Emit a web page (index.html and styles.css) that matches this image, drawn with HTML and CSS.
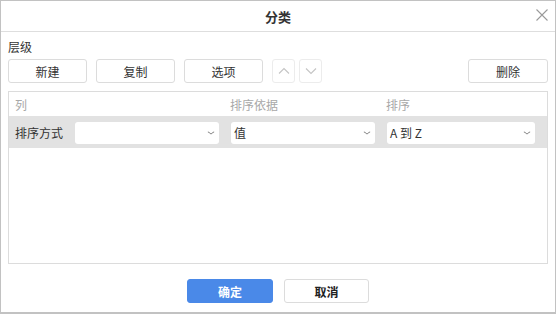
FILE: index.html
```html
<!DOCTYPE html>
<html lang="zh-CN">
<head>
    <meta charset="UTF-8">
    <meta name="viewport" content="width=device-width, initial-scale=1.0">
    <title>分类</title>
    <link rel="stylesheet" href="styles.css">
</head>
<body>
    <div class="dialog">
        <div class="dialog-header">
            <span class="dialog-title">分类</span>
            <button class="close-btn" title="关闭">
                <svg width="12" height="12" viewBox="0 0 12 12"><path d="M0.5 0.5 L11.5 11.5 M11.5 0.5 L0.5 11.5" stroke="#9a9a9a" stroke-width="1.1" fill="none"/></svg>
            </button>
        </div>

        <div class="dialog-body">
            <div class="section-label">层级</div>
            <div class="toolbar">
                <button class="btn">新建</button>
                <button class="btn">复制</button>
                <button class="btn">选项</button>
                <button class="btn-icon">
                    <svg width="12" height="8" viewBox="0 0 12 8"><path d="M1 6.5 L6 1.5 L11 6.5" stroke="#c4c4c4" stroke-width="1.1" fill="none"/></svg>
                </button>
                <button class="btn-icon">
                    <svg width="12" height="8" viewBox="0 0 12 8"><path d="M1 1.5 L6 6.5 L11 1.5" stroke="#c4c4c4" stroke-width="1.1" fill="none"/></svg>
                </button>
                <button class="btn btn-right">删除</button>
            </div>

            <div class="level-table">
                <div class="row row-head">
                    <span>列</span>
                    <span></span>
                    <span class="head-shift">排序依据</span>
                    <span class="head-shift">排序</span>
                </div>
                <div class="row row-level">
                    <span class="row-name">排序方式</span>
                    <div class="fake-select"><span></span><i class="caret"></i></div>
                    <div class="fake-select"><span>值</span><i class="caret"></i></div>
                    <div class="fake-select"><span>A 到 Z</span><i class="caret"></i></div>
                </div>
            </div>
        </div>

        <div class="dialog-footer">
            <button class="btn btn-primary">确定</button>
            <button class="btn btn-cancel">取消</button>
        </div>
    </div>
</body>
</html>
```

FILE: styles.css
```css
* {
    box-sizing: border-box;
}

body {
    margin: 0;
    background: #fff;
    color: #333;
    font-family: "Noto Sans CJK SC", "Liberation Sans", sans-serif;
    font-size: 12px;
    overflow: hidden;
}

.dialog {
    width: 556px;
    height: 314px;
    border: 1px solid #c2c2c2;
    border-bottom-width: 2px;
    background: #fff;
    display: flex;
    flex-direction: column;
}

.dialog-header {
    position: relative;
    height: 31px;
    border-bottom: 1px solid #dedede;
    display: flex;
    justify-content: center;
    align-items: center;
}

.dialog-title {
    font-size: 13px;
    font-weight: bold;
    color: #333;
    line-height: 16px;
    margin-top: 1px;
}

.close-btn {
    position: absolute;
    right: 7px;
    top: 8px;
    width: 12px;
    height: 12px;
    padding: 0;
    border: 0;
    background: none;
    display: flex;
}

.dialog-body {
    padding: 7px 7px 0;
}

.section-label {
    line-height: 16px;
    color: #333;
}

.toolbar {
    display: flex;
    gap: 9px;
    margin-top: 4px;
}

.btn {
    width: 79px;
    height: 24px;
    padding: 0;
    border: 1px solid #dcdcdc;
    border-radius: 3px;
    background: #fff;
    color: #333;
    font-family: inherit;
    font-size: 12px;
}

.btn-icon {
    width: 23px;
    height: 24px;
    padding: 0;
    border: 1px solid #ececec;
    border-radius: 3px;
    background: #fff;
    display: flex;
    align-items: center;
    justify-content: center;
}

.btn-icon + .btn-icon {
    margin-left: -5px;
}

.btn-right {
    margin-left: auto;
    width: 80px;
}

.level-table {
    margin-top: 8px;
    height: 173px;
    border: 1px solid #dcdcdc;
}

.row {
    display: grid;
    grid-template-columns: 48px 144px 144px 148px;
    column-gap: 12px;
    padding-left: 6px;
    align-items: center;
}

.row-head {
    height: 24px;
    color: #a8a8a8;
}

.head-shift {
    margin-left: -1px;
}

.row-level {
    height: 32px;
    background: #e2e2e2;
    padding-top: 1px;
}

.row-name {
    color: #333;
}

.fake-select {
    height: 22px;
    background: #fff;
    border-radius: 3px;
    display: flex;
    align-items: center;
    justify-content: space-between;
    padding: 0 5px 0 3px;
    color: #333;
    font-size: 12px;
}

.caret {
    width: 6px;
    height: 6px;
    border-right: 1.5px solid #666;
    border-bottom: 1.5px solid #666;
    transform: scale(0.8, 0.55) rotate(45deg);
    margin-top: -2px;
}

.dialog-footer {
    display: flex;
    justify-content: center;
    gap: 11px;
    margin-top: 15px;
}

.btn-primary {
    width: 86px;
    background: #4a89e8;
    border-color: #4a89e8;
    color: #fff;
    font-weight: bold;
}

.btn-cancel {
    width: 85px;
    font-weight: bold;
    color: #222;
}
```
